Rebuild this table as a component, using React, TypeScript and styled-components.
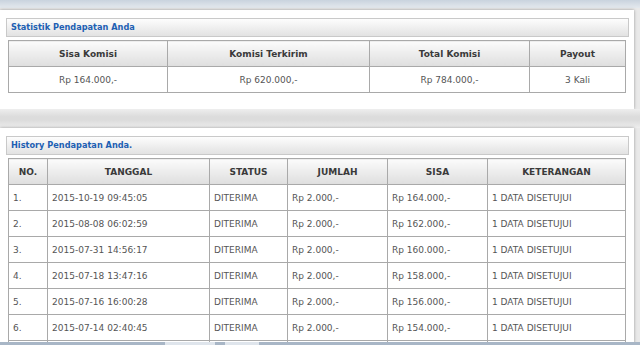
import styled, { createGlobalStyle } from "styled-components";

type Stat = { label: string; value: string };
type History = { tanggal: string; status: string; jumlah: string; sisa: string; ket: string };

const stats: Stat[] = [
  { label: "Sisa Komisi", value: "Rp 164.000,-" },
  { label: "Komisi Terkirim", value: "Rp 620.000,-" },
  { label: "Total Komisi", value: "Rp 784.000,-" },
  { label: "Payout", value: "3 Kali" },
];
const statWidths = [159, 202, 160, 96];

const history: History[] = [
  { tanggal: "2015-10-19 09:45:05", status: "DITERIMA", jumlah: "Rp 2.000,-", sisa: "Rp 164.000,-", ket: "1 DATA DISETUJUI" },
  { tanggal: "2015-08-08 06:02:59", status: "DITERIMA", jumlah: "Rp 2.000,-", sisa: "Rp 162.000,-", ket: "1 DATA DISETUJUI" },
  { tanggal: "2015-07-31 14:56:17", status: "DITERIMA", jumlah: "Rp 2.000,-", sisa: "Rp 160.000,-", ket: "1 DATA DISETUJUI" },
  { tanggal: "2015-07-18 13:47:16", status: "DITERIMA", jumlah: "Rp 2.000,-", sisa: "Rp 158.000,-", ket: "1 DATA DISETUJUI" },
  { tanggal: "2015-07-16 16:00:28", status: "DITERIMA", jumlah: "Rp 2.000,-", sisa: "Rp 156.000,-", ket: "1 DATA DISETUJUI" },
  { tanggal: "2015-07-14 02:40:45", status: "DITERIMA", jumlah: "Rp 2.000,-", sisa: "Rp 154.000,-", ket: "1 DATA DISETUJUI" },
];
const historyCols = [
  { label: "NO.", width: 39 },
  { label: "TANGGAL", width: 162 },
  { label: "STATUS", width: 78 },
  { label: "JUMLAH", width: 100 },
  { label: "SISA", width: 100 },
  { label: "KETERANGAN", width: 138 },
];

const App = () => {
  return (
    <>
      <GlobalStyle />
      <Page>
        <TopBand />
        <Panel>
          <Heading>Statistik Pendapatan Anda</Heading>
          <Table>
            <colgroup>
              {statWidths.map((w, i) => (
                <col key={i} width={w} />
              ))}
            </colgroup>
            <thead>
              <tr>
                {stats.map((s) => (
                  <Th key={s.label}>{s.label}</Th>
                ))}
              </tr>
            </thead>
            <tbody>
              <tr>
                {stats.map((s) => (
                  <Td key={s.label} $center>
                    {s.value}
                  </Td>
                ))}
              </tr>
            </tbody>
          </Table>
        </Panel>
        <Gap />
        <Panel>
          <Heading>History Pendapatan Anda.</Heading>
          <Table>
            <colgroup>
              {historyCols.map((c) => (
                <col key={c.label} width={c.width} />
              ))}
            </colgroup>
            <thead>
              <tr>
                {historyCols.map((c) => (
                  <Th key={c.label}>{c.label}</Th>
                ))}
              </tr>
            </thead>
            <tbody>
              {history.map((h, i) => (
                <tr key={i}>
                  <Td>{i + 1}.</Td>
                  <Td>{h.tanggal}</Td>
                  <Td>{h.status}</Td>
                  <Td>{h.jumlah}</Td>
                  <Td>{h.sisa}</Td>
                  <Td>{h.ket}</Td>
                </tr>
              ))}
              <tr>
                {historyCols.map((c) => (
                  <Td key={c.label} />
                ))}
              </tr>
            </tbody>
          </Table>
        </Panel>
      </Page>
      <BottomBar>
        <BarTab $w={50} />
        <BarTab $w={34} />
      </BottomBar>
    </>
  );
};

export default App;

const GlobalStyle = createGlobalStyle`
  html, body {
    margin: 0;
    padding: 0;
    background: #e6e6e6;
    overflow: hidden;
  }
  body {
    font-family: "DejaVu Sans", Verdana, sans-serif;
  }
`;

const Page = styled.div`
  width: 640px;
  height: 345px;
  overflow: hidden;
  background: #e9e9e9;
`;

const TopBand = styled.div`
  height: 8px;
  background: linear-gradient(#c9d3de, #e4e9ee);
  border-bottom: 2px solid #e9e9e9;
`;

const Panel = styled.div`
  width: 634px;
  background: #fff;
  box-shadow: 0 0 3px rgba(0, 0, 0, 0.35);
  padding: 8px 0 16px 6px;
  box-sizing: border-box;
`;

const Gap = styled.div`
  height: 19px;
  background: linear-gradient(#eeeeee, #dcdcdc 40%, #dcdcdc 60%, #eeeeee);
`;

const Heading = styled.div`
  width: 623px;
  height: 19px;
  box-sizing: border-box;
  border: 1px solid #c9c9c9;
  background: linear-gradient(#fdfdfd, #e2e2e2);
  color: #1d5fb3;
  font-weight: bold;
  font-size: 8.2px;
  line-height: 17px;
  padding-left: 4px;
  margin-bottom: 3px;
`;

const Table = styled.table`
  margin-left: 2px;
  width: 617px;
  table-layout: fixed;
  border-collapse: collapse;
  font-size: 9px;
`;

const Th = styled.th`
  height: 26px;
  padding: 0;
  box-sizing: border-box;
  border: 1px solid #a9a9a9;
  background: linear-gradient(#fbfbfb, #dedede);
  color: #3a3a3a;
  font-weight: bold;
  text-align: center;
`;

const Td = styled.td<{ $center?: boolean }>`
  height: 26px;
  box-sizing: border-box;
  border: 1px solid #a9a9a9;
  color: #555;
  text-align: ${(p) => (p.$center ? "center" : "left")};
  padding: 0 0 0 ${(p) => (p.$center ? "0" : "4px")};
  white-space: nowrap;
`;

const BottomBar = styled.div`
  position: fixed;
  left: 0;
  right: 0;
  bottom: 0;
  height: 3px;
  background: #a8b6c6;
  display: flex;
  padding-left: 165px;
  gap: 10px;
`;

const BarTab = styled.div<{ $w: number }>`
  width: ${(p) => p.$w}px;
  background: #dfe5ec;
`;
